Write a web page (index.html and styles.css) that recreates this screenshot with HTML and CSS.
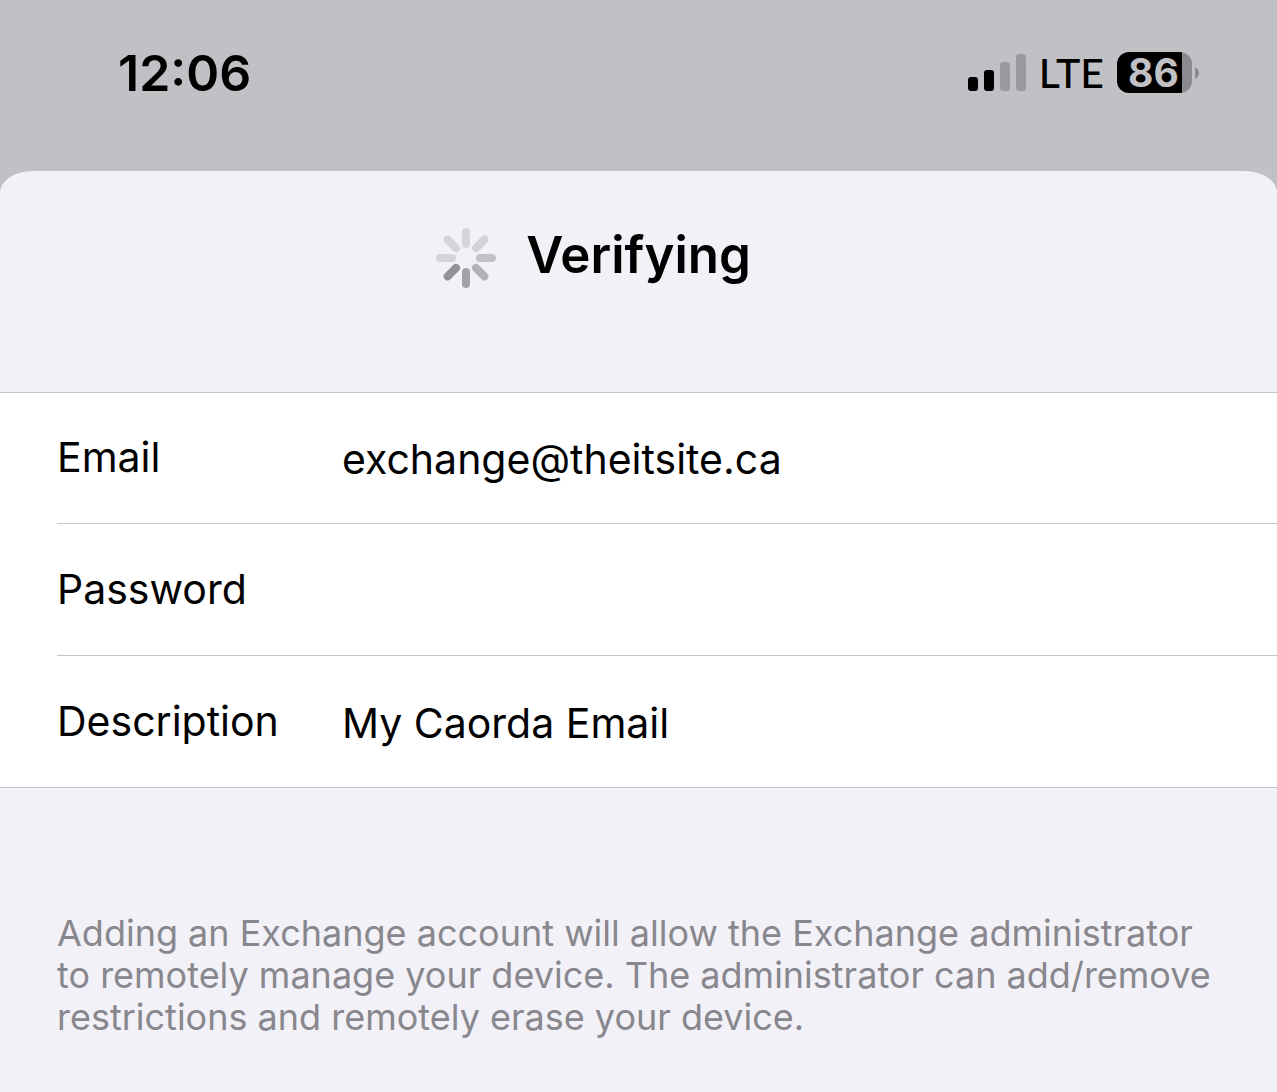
FILE: index.html
```html
<!DOCTYPE html>
<html lang="en">
<head>
  <meta charset="UTF-8">
  <meta name="viewport" content="width=device-width, initial-scale=1.0">
  <title>Verifying</title>
  <link rel="stylesheet" href="styles.css">
</head>
<body>
  <header class="status-bar">
    <span class="time">12:06</span>
    <div class="status-icons">
      <svg class="signal" width="58" height="38" viewBox="0 0 58 38" aria-hidden="true">
        <rect x="0" y="23" width="10" height="14" rx="3"/>
        <rect x="16" y="16" width="10" height="21" rx="3"/>
        <rect class="dim" x="32" y="8" width="10" height="29" rx="3"/>
        <rect class="dim" x="48" y="0" width="10" height="37" rx="3"/>
      </svg>
      <span class="network">LTE</span>
      <div class="battery">
        <span class="battery-level">86</span>
        <svg width="4" height="14" viewBox="0 0 4 14" aria-hidden="true">
          <path d="M0 1C2.500 2 4 4.500 4 7S2.500 12 0 13Z"/>
        </svg>
      </div>
    </div>
  </header>

  <main class="sheet">
    <div class="title-bar">
      <svg class="spinner" width="60" height="60" viewBox="-30 -30 60 60" aria-hidden="true">
        <path stroke="#d5d4da" d="M0-26V-14"/>
        <path stroke="#d3d2d8" d="M18.400-18.400L9.900-9.900"/>
        <path stroke="#c2c1c7" d="M26 0H14"/>
        <path stroke="#b3b2b8" d="M18.400 18.400L9.900 9.900"/>
        <path stroke="#a3a2a8" d="M0 26V14"/>
        <path stroke="#939298" d="M-18.400 18.400L-9.900 9.900"/>
        <path stroke="#d5d4da" d="M-26 0H-14"/>
        <path stroke="#d5d4da" d="M-18.400-18.400L-9.900-9.900"/>
      </svg>
      <h1>Verifying</h1>
    </div>

    <form class="fields">
      <div class="field">
        <label for="email">Email</label>
        <input type="email" id="email" value="exchange@theitsite.ca">
      </div>
      <div class="field">
        <label for="password">Password</label>
        <input type="password" id="password">
      </div>
      <div class="field">
        <label for="description">Description</label>
        <input type="text" id="description" value="My Caorda Email">
      </div>
    </form>

    <p class="note">Adding an Exchange account will allow the Exchange administrator to remotely manage your device. The administrator can add/remove restrictions and remotely erase your device.</p>
  </main>
</body>
</html>
```

FILE: styles.css
```css
* {
  box-sizing: border-box;
}
body {
  margin: 0;
  font-family: Inter, "Liberation Sans", sans-serif;
  color: #000;
  background-color: #c1c0c5;
}
.status-bar {
  display: flex;
  justify-content: space-between;
  align-items: center;
  padding: 40px 78px 64px 118px;
}
.time {
  font-size: 50px;
  line-height: 67px;
  font-weight: 600;
}
.status-icons {
  display: flex;
  align-items: center;
  gap: 13px;
  padding-bottom: 2px;
}
.signal .dim {
  fill: #9b9a9f;
}
.network {
  font-family: Lato, "Open Sans", sans-serif;
  font-size: 41px;
  line-height: 50px;
  font-weight: 500;
}
.battery {
  display: flex;
  align-items: center;
  gap: 3px;
  fill: #8b8a8f;
}
.battery-level {
  width: 75px;
  padding-left: 11px;
  border-radius: 12px;
  font-size: 39px;
  line-height: 41px;
  font-weight: 700;
  color: #c1c0c5;
  background: linear-gradient(to right, #000 65px, #8b8a8f 65px);
}
.sheet {
  min-height: calc(100vh - 171px);
  border-radius: 32px 32px 0 0 / 22px 22px 0 0;
  background-color: #f2f1f7;
}
.title-bar {
  display: flex;
  justify-content: center;
  align-items: center;
  gap: 30px;
  /* right padding balances the spinner so the title stays centered */
  padding: 50px 90px 104px 0;
}
.spinner {
  margin-top: 7px;
  stroke-width: 8px;
  stroke-linecap: round;
}
h1 {
  margin: 0;
  font-size: 51px;
  line-height: 66px;
  font-weight: 600;
}
.fields {
  padding-left: 57px;
  border-top: 1px solid #c5c4c8;
  border-bottom: 1px solid #c5c4c8;
  background-color: #fff;
}
.field {
  display: flex;
  align-items: center;
  height: 130px;
}
.field + .field {
  height: 132px;
  border-top: 1px solid #c5c4c8;
}
label, input {
  font-family: inherit;
  font-size: 41px;
  line-height: 50px;
}
label {
  width: 285px;
  padding-bottom: 2px;
}
input {
  flex: 1;
  min-width: 0;
  padding: 2px 0 0;
  border: none;
  outline: none;
  color: #000;
  background: none;
}
.note {
  margin: 0;
  padding: 124px 57px 54px;
  font-size: 36px;
  line-height: 42px;
  color: #88878d;
}
```
